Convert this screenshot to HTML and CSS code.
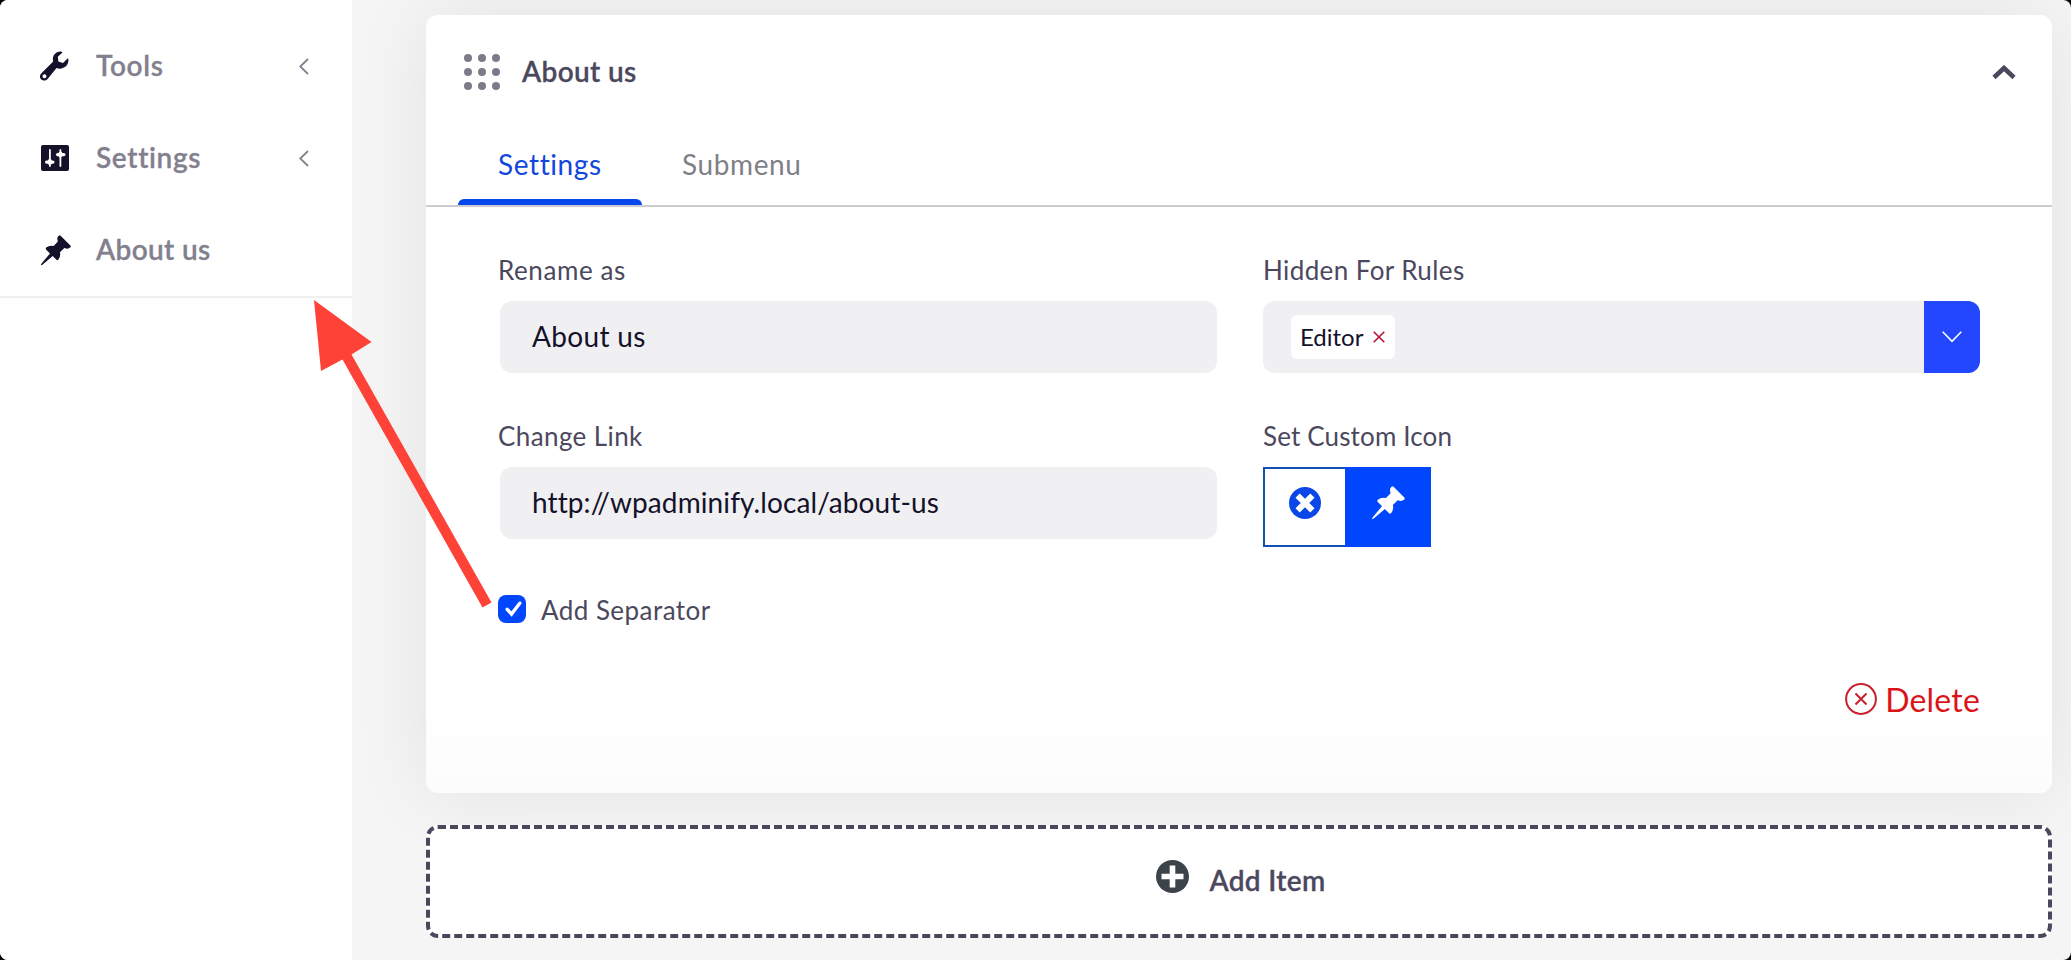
FILE: index.html
```html
<!DOCTYPE html>
<html lang="en">
<head>
  <meta charset="UTF-8">
  <meta name="viewport" content="width=device-width, initial-scale=1.0">
  <title>Menu Editor</title>
  <link rel="stylesheet" href="styles.css">
</head>
<body>
  <svg class="symbols" width="0" height="0">
    <symbol id="pin" viewBox="0 0 34 34">
      <path d="M22.6 0.7Q21.6-.2 20.5.8Q18.4 2.7 19.2 5.6L19.6 7.2L15 12Q10.2 10.8 6.8 13.8Q5.8 14.9 6.8 16.1L11 20.2L2.6 30.2Q.6 32.6 1 33.1Q1.5 33.5 3.9 31.5L13.9 23.1L18 27.2Q19.2 28.2 20.2 27Q22.9 23.4 21.9 18.9L26.7 14.3L28.6 14.8Q31.4 15.4 33.3 13.5Q34.2 12.5 33.3 11.5Z"/>
    </symbol>
  </svg>

  <div class="page">
    <nav class="sidebar">
      <ul class="menu">
        <li class="menu-item">
          <svg class="menu-icon" viewBox="0 0 30 30">
            <path fill-rule="evenodd" d="M21.3.6C15.8.2 11.6 5 13.2 10.5L1.4 22.2C-.6 24.3-.4 26.9 1.2 28.4C2.8 29.8 5.6 30 7.4 28.2L16.5 17.1C21.8 19.4 29.5 15.5 28.3 7.8L27.5 7.4L23 12L18.4 10.4L17.8 5.8L22.5 1.4ZM4.5 23.2a2 2 0 1 1-.01 4a2 2 0 1 1 .01-4Z"/>
          </svg>
          <span class="menu-text">Tools</span>
          <svg class="menu-arrow" viewBox="0 0 10 17"><path d="M9 1L1.2 8.5L9 16"/></svg>
        </li>
        <li class="menu-item">
          <svg class="menu-icon" viewBox="0 0 30 30">
            <rect x="1" y="2" width="28" height="26" rx="2"/>
            <g fill="#fff">
              <rect x="9" y="6" width="1.8" height="18" rx=".9"/>
              <rect x="5" y="17.5" width="9.5" height="3.2" rx="1.6"/>
              <rect x="7.8" y="16" width="4" height="6" rx="2"/>
              <rect x="19.5" y="6" width="1.8" height="18" rx=".9"/>
              <rect x="16" y="10" width="9.5" height="3.2" rx="1.6"/>
              <rect x="18.4" y="8.5" width="4" height="6" rx="2"/>
            </g>
          </svg>
          <span class="menu-text">Settings</span>
          <svg class="menu-arrow" viewBox="0 0 10 17"><path d="M9 1L1.2 8.5L9 16"/></svg>
        </li>
        <li class="menu-item">
          <svg class="menu-icon pinned"><use href="#pin"/></svg>
          <span class="menu-text tight">About us</span>
        </li>
      </ul>
    </nav>

    <main class="content">
      <section class="card">
        <header class="card-header">
          <svg class="drag" viewBox="0 0 36 36">
            <circle cx="4" cy="4" r="4"/><circle cx="18" cy="4" r="4"/><circle cx="32" cy="4" r="4"/>
            <circle cx="4" cy="18" r="4"/><circle cx="18" cy="18" r="4"/><circle cx="32" cy="18" r="4"/>
            <circle cx="4" cy="32" r="4"/><circle cx="18" cy="32" r="4"/><circle cx="32" cy="32" r="4"/>
          </svg>
          <h2 class="card-title">About us</h2>
          <svg class="collapse" viewBox="0 0 24 15"><path d="M2 12.5L12 3L22 12.5"/></svg>
        </header>

        <div class="tabs">
          <a class="tab active">Settings</a>
          <a class="tab">Submenu</a>
        </div>

        <div class="form">
          <div class="field">
            <label class="wide">Rename as</label>
            <div class="input">About us</div>
          </div>
          <div class="field right">
            <label>Hidden For Rules</label>
            <div class="select">
              <div class="tag">
                <span>Editor</span>
                <svg viewBox="0 0 12 12"><path d="M.7.7L11.3 11.3M11.3.7L.7 11.3"/></svg>
              </div>
              <div class="select-btn">
                <svg viewBox="0 0 20 12"><path d="M.7.8L10 10.3L19.3.8"/></svg>
              </div>
            </div>
          </div>
          <div class="field">
            <label>Change Link</label>
            <div class="input link">http://wpadminify.local/about-us</div>
          </div>
          <div class="field right">
            <label class="tight">Set Custom Icon</label>
            <div class="icon-picker">
              <div class="picker-cell">
                <svg viewBox="0 0 32 32">
                  <circle cx="16" cy="16" r="16" fill="#0a46e8"/>
                  <path d="M8.6 8.6L23.4 23.4M23.4 8.6L8.6 23.4" stroke="#fff" stroke-width="6"/>
                </svg>
              </div>
              <div class="picker-cell selected">
                <svg class="pin"><use href="#pin"/></svg>
              </div>
            </div>
          </div>
        </div>

        <div class="separator">
          <div class="checkbox">
            <svg viewBox="0 0 28 28"><path d="M9.2 14.3L13.5 19L21.8 8.2"/></svg>
          </div>
          <span>Add Separator</span>
        </div>

        <div class="delete">
          <svg viewBox="0 0 32 32">
            <circle cx="16" cy="16" r="14.9"/>
            <path d="M10.5 10.5L21.5 21.5M21.5 10.5L10.5 21.5"/>
          </svg>
          <span>Delete</span>
        </div>
      </section>

      <div class="add-item">
        <svg viewBox="0 0 33 33">
          <circle cx="16.5" cy="16.5" r="16.5" fill="#3c434a"/>
          <path d="M16.5 5.5V27.5M5.5 16.5H27.5" stroke="#fff" stroke-width="5.6"/>
        </svg>
        <span>Add Item</span>
      </div>
    </main>

    <svg class="pointer" viewBox="0 0 180 310">
      <path d="M0 0L57.5 42L37.5 54.5L177.5 302.5L168.5 307.5L28.5 59.5L7 71Z"/>
    </svg>
  </div>
</body>
</html>
```
FILE: styles.css
```css
* {
  box-sizing: border-box;
}
body {
  margin: 0;
  background: #000;
  font-family: Lato, "Open Sans", sans-serif;
  font-size: 28px;
  color: #4b485e;
}
svg {
  display: block;
  flex: none;
}
span, label, h2, .input {
  white-space: nowrap;
}
.symbols {
  position: absolute;
}
.page {
  position: relative;
  display: flex;
  height: 960px;
  background: #f5f5f5;
  border-radius: 8px;
  overflow: hidden;
}

/* sidebar */
.sidebar {
  position: relative;
  z-index: 1;
  width: 352px;
  flex: none;
  background: #fff;
}
.menu {
  list-style: none;
  margin: 0;
  padding: 20px 0 0;
  border-bottom: 2px solid #efefef;
}
.menu-item {
  display: flex;
  align-items: center;
  height: 92px;
  padding: 0 43px 0 40px;
  font-weight: 600;
  color: #82808d;
}
.menu-text {
  padding-bottom: 2px;
  letter-spacing: 0.65px;
  -webkit-text-stroke: 0.3px;
}
.menu-text.tight {
  letter-spacing: 0.35px;
}
.menu-icon {
  width: 30px;
  height: 30px;
  margin-right: 26px;
  fill: #14112a;
}
.menu-icon.pinned {
  width: 31px;
  height: 31px;
  margin-right: 25px;
}
.menu-arrow {
  width: 10px;
  height: 17px;
  margin-left: auto;
  fill: none;
  stroke: #82808d;
  stroke-width: 1.8;
}

/* main card */
.content {
  flex: 1;
  padding: 15px 19px 0 74px;
}
.card {
  height: 778px;
  background: linear-gradient(#fff 88%, #fcfcfc);
  border-radius: 12px;
  box-shadow: 0 0 80px rgba(0, 0, 0, 0.08);
}
.card-header {
  display: flex;
  align-items: center;
  height: 114px;
  padding: 0 36px 0 38px;
}
.drag {
  width: 36px;
  height: 36px;
  fill: #7d7b8b;
}
.card-title {
  margin: 0 0 0 22px;
  padding-bottom: 2px;
  font-size: 28px;
  font-weight: 600;
  letter-spacing: 0.35px;
  -webkit-text-stroke: 0.3px;
}
.collapse {
  width: 24px;
  height: 15px;
  margin-left: auto;
  fill: none;
  stroke: #4b485e;
  stroke-width: 4.6;
}
.tabs {
  display: flex;
  height: 78px;
  padding-left: 32px;
  border-bottom: 2px solid #ccc;
}
.tab {
  width: 184px;
  padding: 18px 0 0 40px;
  line-height: 34px;
  letter-spacing: 0.6px;
  color: #7f7f86;
}
.tab.active {
  color: #1246dc;
}
.tab.active::after {
  content: "";
  display: block;
  height: 6px;
  margin: 18px 0 0 -40px;
  background: #0846ee;
  border-radius: 6px 6px 0 0;
}

/* form fields */
.form {
  display: grid;
  grid-template-columns: 717px 717px;
  column-gap: 46px;
  row-gap: 45px;
  padding: 45px 0 0 74px;
}
.field {
  height: 121px;
}
.field label {
  display: block;
  height: 49px;
  margin-left: -2px;
  font-size: 26px;
  line-height: 36px;
  letter-spacing: 0.4px;
}
.field.right label {
  margin-left: 0;
}
.field label.wide {
  letter-spacing: 0.6px;
}
.field label.tight {
  letter-spacing: 0.15px;
}
.input {
  height: 72px;
  padding-left: 32px;
  line-height: 71px;
  letter-spacing: 0.35px;
  color: #14112a;
  background: #f0f0f2;
  border-radius: 12px;
}
.input.link {
  letter-spacing: 0.1px;
}
.select {
  display: flex;
  align-items: center;
  height: 72px;
  padding-left: 28px;
  background: #f0f0f2;
  border-radius: 12px;
  overflow: hidden;
}
.tag {
  display: flex;
  align-items: center;
  width: 104px;
  height: 44px;
  padding: 0 10px 0 9px;
  justify-content: space-between;
  font-size: 24px;
  color: #14112a;
  background: #fff;
  border-radius: 6px;
}
.tag span {
  padding-bottom: 2px;
}
.tag svg {
  width: 12px;
  height: 12px;
  fill: none;
  stroke: #b8143c;
  stroke-width: 1.6;
}
.select-btn {
  display: flex;
  align-items: center;
  justify-content: center;
  width: 56px;
  height: 72px;
  margin-left: auto;
  background: #2346ff;
}
.select-btn svg {
  width: 20px;
  height: 12px;
  fill: none;
  stroke: #fff;
  stroke-width: 1.6;
}
.icon-picker {
  display: flex;
  width: 168px;
  height: 80px;
  border: 2px solid #1250b4;
}
.picker-cell {
  flex: 1;
  display: flex;
  justify-content: center;
  padding: 18px 2px 0 0;
  background: #fff;
}
.picker-cell svg {
  width: 32px;
  height: 32px;
}
.picker-cell.selected {
  flex: none;
  width: 86px;
  margin: -2px;
  padding: 19px 0 0;
  background: #0046ff;
}
.picker-cell .pin {
  width: 34px;
  height: 34px;
  fill: #fff;
}
.separator {
  display: flex;
  align-items: center;
  gap: 15px;
  height: 28px;
  margin: 56px 0 0 72px;
  font-size: 26px;
  letter-spacing: 0.45px;
}
.separator span {
  padding-top: 2px;
}
.checkbox {
  width: 28px;
  height: 28px;
  background: #0046ff;
  border-radius: 8px;
}
.checkbox path {
  fill: none;
  stroke: #fff;
  stroke-width: 3.4;
  stroke-linecap: round;
}
.delete {
  display: flex;
  align-items: center;
  justify-content: flex-end;
  gap: 8px;
  height: 40px;
  margin: 56px 72px 0 0;
  font-size: 32px;
  letter-spacing: 0.2px;
  color: #dc1418;
}
.delete svg {
  width: 32px;
  height: 32px;
  fill: none;
  stroke: #c8202c;
  stroke-width: 2;
}

.add-item {
  display: flex;
  align-items: center;
  justify-content: center;
  gap: 20px;
  position: relative;
  height: 113px;
  margin-top: 32px;
  padding: 0 0 3px 4px;
  font-weight: 600;
  letter-spacing: 0.35px;
  background: #fff;
  border: 4px dashed #4b485e;
  border-radius: 12px;
}
.add-item span {
  -webkit-text-stroke: 0.3px;
}
.add-item svg {
  width: 33px;
  height: 33px;
  margin-bottom: 8px;
}

/* callout arrow from the checkbox to the new separator */
.pointer {
  position: absolute;
  z-index: 2;
  left: 314px;
  top: 300px;
  width: 180px;
  height: 310px;
  fill: #ff4238;
}
```
